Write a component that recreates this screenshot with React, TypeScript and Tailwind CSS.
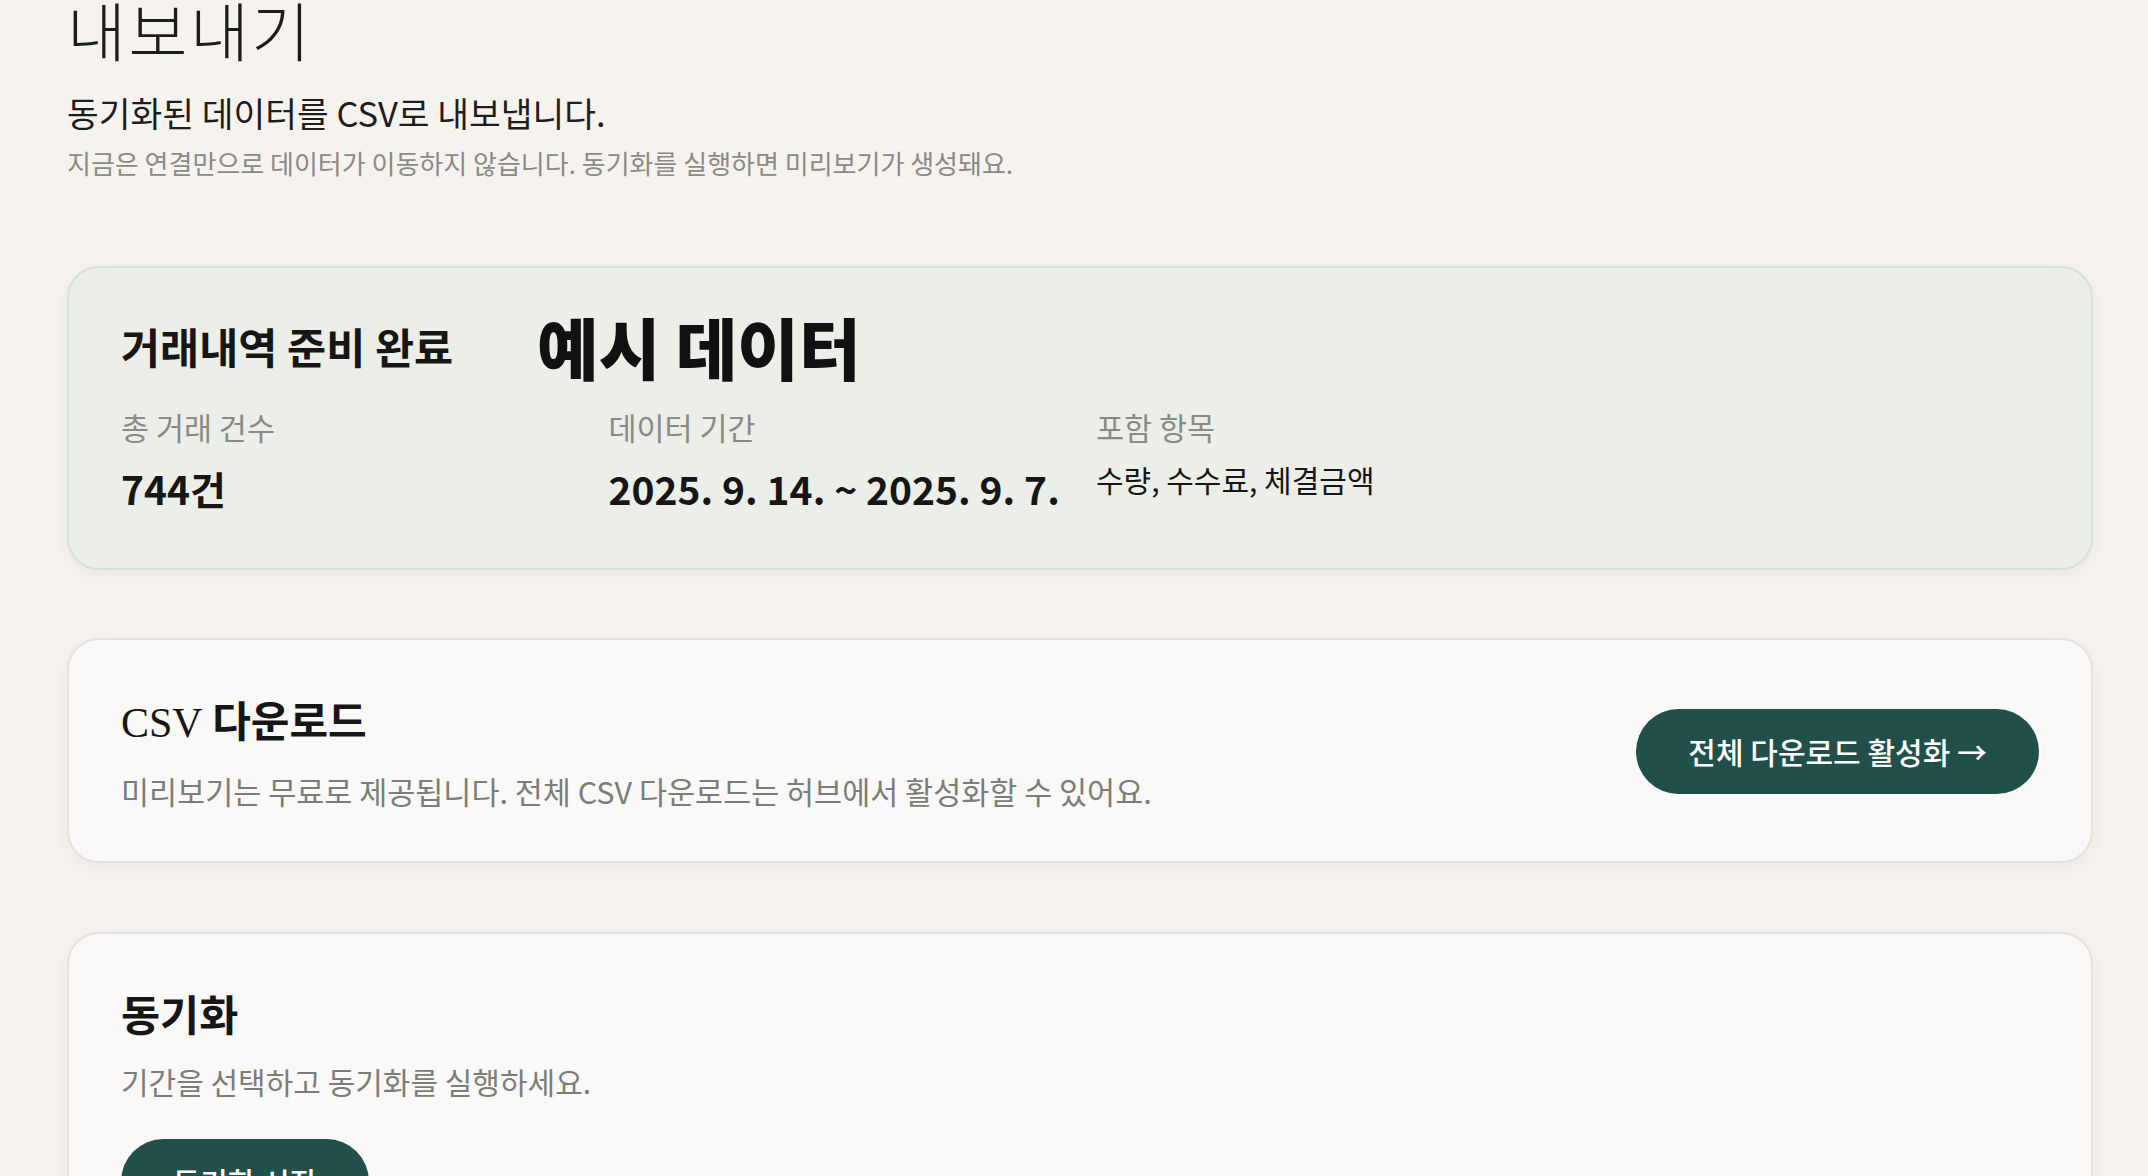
const SANS = "font-['Noto_Sans_CJK_KR','Noto_Sans',sans-serif]";

const STATS = [
  { label: '총 거래 건수', value: '744건', big: true },
  { label: '데이터 기간', value: '2025. 9. 14. ~ 2025. 9. 7.', big: true },
  { label: '포함 항목', value: '수량, 수수료, 체결금액', big: false },
];

export default function App() {
  return (
    <div className={`min-h-screen overflow-hidden bg-[#f6f3ee] pl-[67px] pr-[55px] text-[#161616] ${SANS}`}>
      {/* Header */}
      <h1 className="-mt-[4px] text-[64px] font-light leading-none tracking-[0.04em] text-[#1c1c1c]">내보내기</h1>
      <p className="mt-[29px] text-[34.5px] leading-[46px] text-[#1d1d1d]">동기화된 데이터를 CSV로 내보냅니다.</p>
      <p className="mt-[10px] text-[26px] leading-[36px] text-[#8a8a86]">
        지금은 연결만으로 데이터가 이동하지 않습니다. 동기화를 실행하면 미리보기가 생성돼요.
      </p>

      {/* Summary card */}
      <section className="mt-[85px] rounded-[32px] border-2 border-[#d3e3dc] bg-[#ebefe8] px-[52px] pt-[44px] pb-[54px] shadow-[0_6px_18px_rgba(60,50,30,0.05)]">
        <div className="flex items-center gap-[84px]">
          <h2 className="text-[42.5px] font-bold leading-[56px]">거래내역 준비 완료</h2>
          <span className="text-[67px] font-black leading-none text-[#111]">예시 데이터</span>
        </div>
        <div className="mt-[27px] grid grid-cols-4 gap-8">
          {STATS.map((s) => (
            <div key={s.label}>
              <div className="text-[30.5px] leading-[42px] text-[#8a8a86]">{s.label}</div>
              {s.big ? (
                <div className="mt-[14px] text-[39px] font-bold leading-[52px]">{s.value}</div>
              ) : (
                <div className="mt-[14px] text-[30px] font-normal leading-[34px]">{s.value}</div>
              )}
            </div>
          ))}
        </div>
      </section>

      {/* CSV download */}
      <section className="mt-[68px] flex items-center justify-between rounded-[32px] border-2 border-[#e6e2db] bg-[#faf9f7] px-[52px] pt-[52px] pb-[50px] shadow-[0_6px_18px_rgba(60,50,30,0.05)]">
        <div>
          <h2 className="text-[42px] leading-[54px]">
            <span className="font-['Liberation_Serif',serif] font-normal">CSV</span>{' '}
            <span className="font-semibold">다운로드</span>
          </h2>
          <p className="mt-[21px] text-[30.5px] leading-[40px] text-[#7b7d79]">
            미리보기는 무료로 제공됩니다. 전체 CSV 다운로드는 허브에서 활성화할 수 있어요.
          </p>
        </div>
        <button className="h-[85px] rounded-full bg-[#214f4a] px-[52px] text-[30px] font-medium text-white">
          전체 다운로드 활성화 →
        </button>
      </section>

      {/* Sync */}
      <section className="mt-[69px] rounded-[32px] border-2 border-[#e6e2db] bg-[#faf9f7] p-[52px] shadow-[0_6px_18px_rgba(60,50,30,0.05)]">
        <h2 className="text-[42.5px] font-semibold leading-[54px]">동기화</h2>
        <p className="mt-[21px] text-[30px] leading-[40px] text-[#7b7d79]">기간을 선택하고 동기화를 실행하세요.</p>
        <button className="mt-[38px] h-[85px] w-[248px] rounded-full bg-[#214f4a] text-[30px] font-medium text-white">
          동기화 시작
        </button>
      </section>
    </div>
  );
}
